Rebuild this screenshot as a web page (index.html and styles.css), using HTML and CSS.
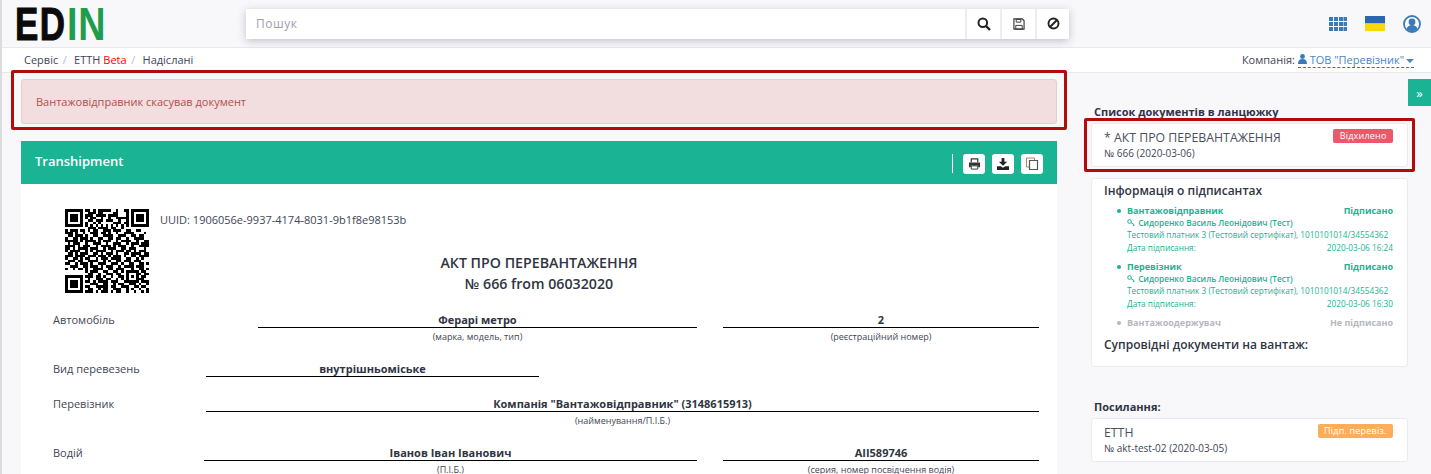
FILE: index.html
```html
<!DOCTYPE html>
<html lang="en">
  <head>
    <meta charset="UTF-8" />
    <title>EDIN - Transhipment</title>
    <link rel="stylesheet" href="styles.css">
  </head>
  <body>
    <!-- =========== header ========= -->
    <header class="topbar">
      <div class="logo"><span class="logo-dark">ED</span><span class="logo-green">IN</span></div>
      <div class="search">
        <div class="search-input">Пошук</div>
        <button class="search-btn">
          <svg width="14" height="14" viewBox="0 0 14 14"><circle cx="5.8" cy="5.8" r="4.3" fill="none" stroke="#222" stroke-width="2"/><path d="M9 9l4 4" stroke="#222" stroke-width="2.4"/></svg>
        </button>
        <button class="search-btn">
          <svg width="12" height="12" viewBox="0 0 13 13"><path d="M1 1h9l2 2v9H1z" fill="none" stroke="#333" stroke-width="1.2"/><path d="M3.5 1.5h5v3h-5zM3 8h7v4H3z" fill="none" stroke="#333"/></svg>
        </button>
        <button class="search-btn">
          <svg width="13" height="13" viewBox="0 0 13 13"><circle cx="6.5" cy="6.5" r="5" fill="none" stroke="#222" stroke-width="1.9"/><path d="M3 10l7-7" stroke="#222" stroke-width="1.9"/></svg>
        </button>
      </div>
      <div class="top-icons">
        <svg width="18" height="14" viewBox="0 0 18 14" fill="#3a7ab8"><path d="M0 0h4v4H0zM5 0h4v4H5zM10 0h4v4h-4zM14.500 0H18v4h-3.500zM0 5h4v4H0zM5 5h4v4H5zM10 5h4v4h-4zM14.500 5H18v4h-3.500zM0 10h4v4H0zM5 10h4v4H5zM10 10h4v4h-4zM14.500 10H18v4h-3.500z"/></svg>
        <svg width="20" height="15" viewBox="0 0 20 15"><path d="M0 0h20v7.500H0z" fill="#2a66b5"/><path d="M0 7.500h20V15H0z" fill="#fdd800"/></svg>
        <svg width="18" height="18" viewBox="0 0 18 18"><circle cx="9" cy="9" r="8" fill="#fff" stroke="#3a7ab8" stroke-width="1.800"/><circle cx="9" cy="7" r="3.400" fill="#3a7ab8"/><path d="M3.500 14c1-3 3-4 5.500-4s4.500 1 5.500 4c-3 2.800-8 2.800-11 0z" fill="#3a7ab8"/></svg>
      </div>
    </header>

    <!-- =========== breadcrumb ========= -->
    <nav class="crumbs">
      <div class="crumbs-left">
        <span>Сервіс</span><i>/</i>
        <span>ЕТТН <b class="beta">Beta</b></span><i>/</i>
        <span>Надіслані</span>
      </div>
      <div class="company">
        Компанія:
        <a class="company-link">
          <svg width="9" height="10" viewBox="0 0 9 10" fill="#3a7ab8"><circle cx="4.500" cy="2.500" r="2.400"/><path d="M0 10c0-3.500 1.500-5 4.500-5S9 6.500 9 10z"/></svg>
          ТОВ "Перевізник"
          <span class="caret"></span>
        </a>
      </div>
    </nav>

    <!-- =========== content ========= -->
    <main class="layout">
      <section class="left-col">
        <div class="alert">Вантажовідправник скасував документ</div>

        <div class="doc-card">
          <div class="doc-head">
            <h2>Transhipment</h2>
            <div class="doc-tools">
              <span class="doc-divider"></span>
              <button class="tool-btn">
                <svg width="13" height="12" viewBox="0 0 14 13"><path d="M3.500 4.500V1h7v3.500" fill="none" stroke="#333" stroke-width="1.300"/><path d="M1 5h12v5h-2V8H3v2H1z" fill="#333"/><path d="M3.500 8.500h7V12h-7z" fill="none" stroke="#333"/></svg>
              </button>
              <button class="tool-btn">
                <svg width="12" height="12" viewBox="0 0 13 13" fill="#222"><path d="M5 0h3v4h3L6.500 8.500 2 4h3z"/><path d="M0 9h4l2.500 1.500L9 9h4v4H0z"/></svg>
              </button>
              <button class="tool-btn">
                <svg width="14" height="14" viewBox="0 0 14 14" fill="none" stroke="#555"><path d="M9.500 3V1h-8v9h2.500" stroke="#a98a5a"/><path d="M4.500 3.500h8v9h-8z" stroke-width="1.200"/></svg>
              </button>
            </div>
          </div>

          <div class="doc-body">
            <div class="doc-top">
              <svg class="qr" width="84" height="84" viewBox="0 0 33 33" shape-rendering="crispEdges">
                <path fill-rule="evenodd" d="M0 0h7v7H0zM1 1v5h5V1zM2 2h3v3H2zM26 0h7v7h-7zM27 1v5h5V1zM28 2h3v3h-3zM0 26h7v7H0zM1 27v5h5v-5zM2 28h3v3H2z"/>
                <path fill-rule="evenodd" d="M24 24h5v5h-5zM25 25v3h3v-3zM26 26h1v1h-1z"/>
                <path fill="none" stroke="#000" d="M8 .5h2M11 .5h1M13 .5h5M20 .5h1M23 .5h2
                  M9 1.500h3M13 1.500h2M19 1.500h2M24 1.500h1
                  M8 2.500h3M12 2.500h4M17 2.500h4M24 2.500h1
                  M8 3.500h1M10 3.500h2M14 3.500h1M17 3.500h1M20 3.500h3M23 3.500h2
                  M9 4.500h2M12 4.500h3M16 4.500h3M21 4.500h1M24 4.500h1
                  M8 5.500h1M11 5.500h1M13 5.500h1M19 5.500h3M23 5.500h2
                  M8 6.500h1M10 6.500h1M12 6.500h1M14 6.500h1M16 6.500h1M18 6.500h1M20 6.500h1M22 6.500h1M24 6.500h1
                  M9 7.500h3M13 7.500h4M18 7.500h2M22 7.500h1
                  M0 8.500h1M2 8.500h3M6 8.500h2M9 8.500h1M11 8.500h2M15 8.500h3M19 8.500h3M24 8.500h2M28 8.500h2
                  M0 9.500h3M4 9.500h1M7 9.500h1M10 9.500h3M14 9.500h2M17 9.500h1M20 9.500h1M23 9.500h4M31 9.500h1
                  M1 10.500h2M4 10.500h3M8 10.500h1M11 10.500h2M15 10.500h4M21 10.500h3M26 10.500h2M29 10.500h2
                  M0 11.500h1M3 11.500h2M6 11.500h3M10 11.500h1M13 11.500h2M17 11.500h2M20 11.500h2M24 11.500h1M27 11.500h4
                  M0 12.500h5M6 12.500h1M8 12.500h4M13 12.500h1M15 12.500h3M20 12.500h1M22 12.500h4M28 12.500h1M31 12.500h2
                  M1 13.500h1M3 13.500h3M8 13.500h1M11 13.500h3M16 13.500h1M19 13.500h3M24 13.500h1M26 13.500h3M30 13.500h3
                  M0 14.500h4M5 14.500h1M7 14.500h3M12 14.500h1M14 14.500h4M19 14.500h1M21 14.500h3M26 14.500h1M29 14.500h4
                  M0 15.500h2M3 15.500h1M5 15.500h4M10 15.500h3M15 15.500h1M17 15.500h3M22 15.500h2M25 15.500h3M31 15.500h1
                  M0 16.500h1M2 16.500h4M8 16.500h1M10 16.500h1M12 16.500h4M18 16.500h1M20 16.500h3M24 16.500h2M27 16.500h1M29 16.500h3
                  M1 17.500h2M4 17.500h1M6 17.500h3M11 17.500h2M14 17.500h1M16 17.500h3M20 17.500h1M23 17.500h2M26 17.500h4M31 17.500h2
                  M0 18.500h3M4 18.500h4M9 18.500h3M13 18.500h3M17 18.500h1M19 18.500h3M23 18.500h1M26 18.500h2M29 18.500h4
                  M0 19.500h1M3 19.500h2M6 19.500h1M8 19.500h2M12 19.500h1M14 19.500h3M18 19.500h4M24 19.500h2M28 19.500h1M30 19.500h1
                  M1 20.500h3M5 20.500h2M9 20.500h4M15 20.500h1M17 20.500h1M20 20.500h2M23 20.500h3M27 20.500h3
                  M0 21.500h2M4 21.500h1M6 21.500h3M10 21.500h1M13 21.500h3M18 21.500h3M22 21.500h1M25 21.500h2M29 21.500h2M32 21.500h1
                  M2 22.500h3M7 22.500h2M10 22.500h3M14 22.500h1M16 22.500h3M21 22.500h1M23 22.500h4M28 22.500h3
                  M0 23.500h1M3 23.500h1M5 23.500h2M8 23.500h1M11 23.500h4M17 23.500h2M20 23.500h3M26 23.500h1M29 23.500h2M32 23.500h1
                  M8 24.500h1M10 24.500h3M15 24.500h2M19 24.500h2M22 24.500h1M30 24.500h2
                  M9 25.500h2M13 25.500h1M16 25.500h3M20 25.500h2M29 25.500h1M31 25.500h2
                  M8 26.500h3M12 26.500h2M15 26.500h1M18 26.500h1M21 26.500h2M30 26.500h2
                  M9 27.500h1M12 27.500h3M16 27.500h2M20 27.500h1M22 27.500h1M29 27.500h2
                  M8 28.500h2M11 28.500h1M13 28.500h4M18 28.500h3M23 28.500h1M30 28.500h3
                  M10 29.500h3M15 29.500h2M19 29.500h1M21 29.500h2M25 29.500h3M29 29.500h1M32 29.500h1
                  M8 30.500h2M12 30.500h5M18 30.500h2M22 30.500h3M27 30.500h2M30 30.500h2
                  M9 31.500h2M13 31.500h1M15 31.500h2M19 31.500h3M24 31.500h1M26 31.500h1M29 31.500h1M32 31.500h1
                  M8 32.500h3M12 32.500h1M14 32.500h3M18 32.500h1M20 32.500h2M24 32.500h1M27 32.500h1M30 32.500h1M32 32.500h1"/>
              </svg>
              <div class="doc-meta">
                <div class="uuid">UUID: 1906056e-9937-4174-8031-9b1f8e98153b</div>
                <h1 class="doc-title">АКТ ПРО ПЕРЕВАНТАЖЕННЯ<br />№ 666 from 06032020</h1>
              </div>
            </div>

            <div class="doc-row">
              <div class="row-label label-wide">Автомобіль</div>
              <div class="field field-main">
                <div class="field-value">Ферарі метро</div>
                <div class="field-note">(марка, модель, тип)</div>
              </div>
              <div class="field field-side">
                <div class="field-value">2</div>
                <div class="field-note">(реєстраційний номер)</div>
              </div>
            </div>

            <div class="doc-row doc-row-short">
              <div class="row-label">Вид перевезень</div>
              <div class="field field-half">
                <div class="field-value">внутрішньоміське</div>
              </div>
            </div>

            <div class="doc-row">
              <div class="row-label">Перевізник</div>
              <div class="field field-main">
                <div class="field-value">Компанія "Вантажовідправник" (3148615913)</div>
                <div class="field-note">(найменування/П.І.Б.)</div>
              </div>
            </div>

            <div class="doc-row">
              <div class="row-label label-narrow">Водій</div>
              <div class="field field-main">
                <div class="field-value">Іванов Іван Іванович</div>
                <div class="field-note">(П.І.Б.)</div>
              </div>
              <div class="field field-side">
                <div class="field-value">АІІ589746</div>
                <div class="field-note">(серия, номер посвідчення водія)</div>
              </div>
            </div>
          </div>
        </div>
      </section>

      <aside class="side-col">
        <h4 class="side-title">Список документів в ланцюжку</h4>
        <div class="side-card chain-card">
          <div class="chain-top">
            <span class="chain-name">* АКТ ПРО ПЕРЕВАНТАЖЕННЯ</span>
            <span class="badge badge-red">Відхилено</span>
          </div>
          <div class="chain-sub">№ 666 (2020-03-06)</div>
        </div>

        <div class="side-card info-card">
          <h3>Інформація о підписантах</h3>
          <ul class="signers">
            <li class="signer">
              <div class="line strong"><span>Вантажовідправник</span><span>Підписано</span></div>
              <div class="line person">
                <span><svg class="key" width="9" height="8" viewBox="0 0 9 8" fill="none" stroke="#1ab394"><circle cx="2.500" cy="2.500" r="1.800"/><path d="M4 3.500l3.500 2.500M6.500 5.500v1.500"/></svg> Сидоренко Василь Леонідович (Тест)</span>
              </div>
              <div class="line">Тестовий платник 3 (Тестовий сертифікат), 1010101014/34554362</div>
              <div class="line"><span>Дата підписання:</span><span>2020-03-06 16:24</span></div>
            </li>
            <li class="signer">
              <div class="line strong"><span>Перевізник</span><span>Підписано</span></div>
              <div class="line person">
                <span><svg class="key" width="9" height="8" viewBox="0 0 9 8" fill="none" stroke="#1ab394"><circle cx="2.500" cy="2.500" r="1.800"/><path d="M4 3.500l3.500 2.500M6.500 5.500v1.500"/></svg> Сидоренко Василь Леонідович (Тест)</span>
              </div>
              <div class="line">Тестовий платник 3 (Тестовий сертифікат), 1010101014/34554362</div>
              <div class="line"><span>Дата підписання:</span><span>2020-03-06 16:30</span></div>
            </li>
            <li class="signer signer-off">
              <div class="line strong"><span>Вантажоодержувач</span><span>Не підписано</span></div>
            </li>
          </ul>
          <h3 class="docs-title">Супровідні документи на вантаж:</h3>
        </div>

        <h4 class="side-title">Посилання:</h4>
        <div class="side-card chain-card">
          <div class="chain-top">
            <span class="chain-name">ЕТТН</span>
            <span class="badge badge-orange">Підп. перевіз.</span>
          </div>
          <div class="chain-sub">№ akt-test-02 (2020-03-05)</div>
        </div>
      </aside>
    </main>

    <button class="side-toggle">»</button>

    <!-- red marks drawn over the screenshot -->
    <div class="mark mark-alert"></div>
    <div class="mark mark-chain"></div>
  </body>
</html>
```

FILE: styles.css
```css
* {
  margin: 0;
  padding: 0;
  box-sizing: border-box;
}

html,
body {
  height: 474px;
  overflow: hidden;
}

body {
  position: relative;
  background: #f8f8fb;
  border-left: 2px solid #dcdcdf;
  color: #3e4656;
  font-family: "Open Sans", sans-serif;
  font-size: 11px;
}

button {
  border: none;
  cursor: pointer;
  font-family: inherit;
}

/* ============== header ========================== */
.topbar {
  display: flex;
  align-items: center;
  height: 48px;
  border-bottom: 1px solid #e8e8ec;
}

.logo {
  width: 244px;
  padding-left: 13px;
  font-family: "Liberation Sans", sans-serif;
  font-weight: bold;
  font-size: 46px;
  line-height: 46px;
  white-space: nowrap;
}

.logo-dark,
.logo-green {
  display: inline-block;
  transform-origin: left center;
}

.logo-dark {
  color: #0a0a0a;
  width: 52px;
  letter-spacing: 2px;
  transform: scaleX(0.76);
  -webkit-text-stroke: 1px #0a0a0a;
}

.logo-green {
  color: #1f9d4d;
  letter-spacing: 1px;
  transform: scaleX(0.82);
}

.search {
  display: flex;
  width: 823px;
  height: 30px;
  gap: 2px;
  background: #eeeef1;
  box-shadow: 0 2px 8px rgba(60, 60, 90, 0.3);
}

.search-input {
  flex: 1;
  background: #fff;
  padding: 0 10px;
  line-height: 29px;
  font-size: 12px;
  letter-spacing: 0.5px;
  color: #9da1ab;
}

.search-btn {
  display: flex;
  align-items: center;
  justify-content: center;
  width: 33px;
  background: #fff;
}

.search-btn:last-child {
  width: 32px;
}

.top-icons {
  display: flex;
  align-items: center;
  gap: 18px;
  margin-left: 260px;
}

/* ============== breadcrumb ========================== */
.crumbs {
  display: flex;
  justify-content: space-between;
  align-items: center;
  height: 25px;
  padding: 0 17px 2px 22px;
  background: #fff;
  border-bottom: 1px solid #e8e8ec;
  font-size: 11px;
}

.crumbs-left i {
  font-style: normal;
  color: #bbb;
  margin: 0 4.5px;
}

.beta {
  font-weight: normal;
  color: #f00;
}

.company-link {
  color: #4787c4;
  border-bottom: 1px dashed #3a6fa5;
}

.caret {
  display: inline-block;
  width: 0;
  height: 0;
  margin-left: -1px;
  border-left: 4px solid transparent;
  border-right: 4px solid transparent;
  border-top: 4px solid #4787c4;
  vertical-align: 1px;
}

/* ============== layout ========================== */
.layout {
  display: flex;
  align-items: flex-start;
  padding: 6px 0 0 19px;
}

.left-col {
  width: 1036px;
}

.alert {
  height: 45px;
  padding: 0 14px;
  margin-bottom: 17px;
  line-height: 43px;
  color: #b0504f;
  background: #f2dede;
  border: 1px solid #ebcccc;
  border-radius: 3px;
}

.doc-card {
  background: #fff;
  height: 340px;
}

.doc-head {
  display: flex;
  align-items: center;
  justify-content: space-between;
  height: 43px;
  padding: 0 14px;
  background: #1ab394;
}

.doc-head h2 {
  margin-top: -3px;
  font-size: 13px;
  font-weight: 600;
  color: #fff;
}

.doc-tools {
  display: flex;
  align-items: center;
  gap: 7px;
  margin-top: 2px;
}

.doc-divider {
  width: 1px;
  height: 19px;
  background: #fff;
  margin-right: 3px;
}

.tool-btn {
  display: flex;
  align-items: center;
  justify-content: center;
  width: 22px;
  height: 20px;
  background: #fff;
  border-radius: 3px;
}

.doc-body {
  padding: 25px 18px 0 32px;
}

.doc-top {
  display: flex;
  margin-bottom: 19px;
}

.qr {
  margin-left: 12px;
  flex-shrink: 0;
}

.doc-meta {
  width: 758px;
  margin-left: 11px;
  padding-top: 3px;
}

.uuid {
  line-height: 16px;
}

.doc-title {
  margin-top: 24px;
  text-align: center;
  font-size: 14.2px;
  font-weight: 600;
  line-height: 21px;
  color: #2f3542;
}

.doc-row {
  display: flex;
  min-height: 30px;
  margin-bottom: 19px;
}

.doc-row-short {
  min-height: 16px;
}

.row-label {
  width: 153px;
  flex-shrink: 0;
  line-height: 14px;
}

.label-wide {
  width: 205px;
}

.label-narrow {
  width: 151px;
}

.field {
  text-align: center;
}

.field-main {
  flex: 1;
}

.field-side {
  width: 316px;
  margin-left: 26px;
}

.field-half {
  width: 333px;
}

.field-value {
  height: 15px;
  line-height: 14px;
  font-weight: 700;
  color: #2f3542;
  border-bottom: 1px solid #000;
}

.field-note {
  height: 15px;
  font-size: 9px;
  line-height: 18px;
}

/* ============== side column ========================== */
.side-col {
  width: 317px;
  margin-left: 34px;
  padding-top: 24px;
}

.side-title {
  margin-bottom: 2px;
  padding-left: 3px;
  font-size: 11px;
  font-weight: 700;
  line-height: 18px;
  color: #2f3542;
}

.side-card {
  background: #fff;
  border: 1px solid #ebebef;
  border-radius: 3px;
}

.chain-card {
  height: 44px;
  padding: 4px 14px 0 12px;
}

.chain-top {
  display: flex;
  align-items: center;
  justify-content: space-between;
  height: 16px;
}

.chain-name {
  padding-top: 2px;
  font-size: 12.3px;
  color: #4a505c;
}

.chain-sub {
  margin-top: 2px;
  font-size: 10px;
  line-height: 15px;
}

.badge {
  height: 14px;
  padding: 0 6.5px;
  border-radius: 2px;
  font-size: 9px;
  line-height: 14px;
  letter-spacing: 0.2px;
  color: #fff;
}

.badge-red {
  background: #f0566a;
}

.badge-orange {
  background: #fbad5b;
}

.info-card {
  height: 189px;
  margin: 11px 0 31px;
  padding: 3px 14px 0 12px;
}

.info-card h3 {
  font-size: 12px;
  font-weight: 600;
  line-height: 18px;
  color: #2f3542;
}

.signers {
  list-style: none;
  margin-top: 4.5px;
  padding-left: 23px;
}

.signer {
  position: relative;
  margin-bottom: 6.5px;
  color: #1ab394;
}

.signer::before {
  content: "";
  position: absolute;
  left: -10px;
  top: 4px;
  width: 4px;
  height: 4px;
  border-radius: 50%;
  background: currentColor;
}

.signer-off {
  color: #b5b7c0;
}

.line {
  display: flex;
  justify-content: space-between;
  font-size: 8.25px;
  line-height: 12.4px;
  white-space: nowrap;
}

.strong {
  font-size: 9px;
  font-weight: 700;
}

.person {
  font-weight: 600;
}

.key {
  vertical-align: -1px;
}

.docs-title {
  margin-top: 7px;
}

/* over the content */
.side-toggle {
  position: absolute;
  top: 79px;
  right: 0;
  width: 23px;
  height: 27px;
  background: #1ab394;
  color: #fff;
  font-size: 13px;
}

.mark {
  position: absolute;
  border: 3px solid #b30a0a;
  border-radius: 2px;
}

.mark-alert {
  left: 9px;
  top: 70px;
  width: 1056px;
  height: 60px;
}

.mark-chain {
  left: 1082px;
  top: 118px;
  width: 331px;
  height: 54px;
}
```
